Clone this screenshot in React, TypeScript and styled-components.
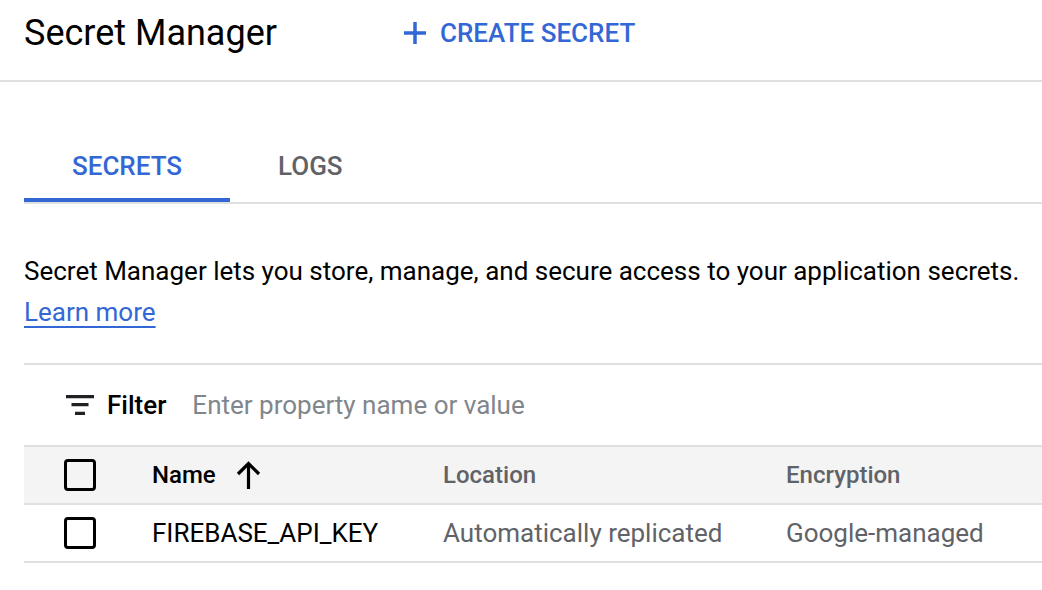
import React from "react";
import styled, { createGlobalStyle } from "styled-components";

const Global = createGlobalStyle`
  html, body { margin: 0; padding: 0; background: #fff; }
  body { font-family: Roboto, "Noto Sans", Arial, sans-serif; color: #202124; }
`;

const Page = styled.div`
  width: 1042px;
  height: 590px;
  overflow: hidden;
  display: flex;
  flex-direction: column;
`;

const Header = styled.header`
  height: 82px;
  flex-shrink: 0;
  display: flex;
  align-items: center;
  padding: 0 24px;
  border-bottom: 2px solid #e0e0e0;
  box-sizing: border-box;
`;

const Title = styled.h1`
  margin: -14px 0 0;
  font-size: 36px;
  font-weight: 400;
  color: #000;
  width: 379px;
  flex-shrink: 0;
`;

const CreateButton = styled.button`
  display: flex;
  align-items: center;
  gap: 13px;
  background: none;
  border: none;
  padding: 0;
  color: #3367d6;
  font-family: inherit;
  font-size: 26px;
  font-weight: 500;
  margin-top: -14px;
  white-space: nowrap;
`;

const Content = styled.div`
  padding: 0 0 0 24px;
`;

const Tabs = styled.div`
  margin-top: 48px;
  display: flex;
  border-bottom: 2px solid #e0e0e0;
`;

const Tab = styled.div<{ $active?: boolean }>`
  width: ${(p) => (p.$active ? "206px" : "auto")};
  padding: ${(p) => (p.$active ? "0" : "0 0 0 48px")};
  height: 72px;
  box-sizing: border-box;
  display: flex;
  align-items: center;
  justify-content: ${(p) => (p.$active ? "center" : "flex-start")};
  font-size: 26px;
  font-weight: 500;
  color: ${(p) => (p.$active ? "#3367d6" : "#5f6368")};
  border-bottom: 4px solid ${(p) => (p.$active ? "#3367d6" : "transparent")};
  padding-top: 4px;
`;

const Description = styled.p`
  margin: 47px 0 0;
  font-size: 26px;
  line-height: 41px;
  color: #000;
  white-space: nowrap;
`;

const LearnMore = styled.a`
  color: #3367d6;
  text-decoration: underline;
  text-decoration-thickness: 2px;
  text-underline-offset: 5px;
`;

const Divider = styled.div`
  margin-top: 30px;
  border-top: 2px solid #e0e0e0;
`;

const FilterBar = styled.div`
  height: 80px;
  display: flex;
  align-items: center;
  padding-left: 42px;
`;

const FilterLabel = styled.span`
  font-size: 26px;
  font-weight: 500;
  color: #000;
  margin-left: 13px;
`;

const FilterInput = styled.span`
  font-size: 26px;
  color: #80868b;
  margin-left: 26px;
`;

const Table = styled.div`
  display: flex;
  flex-direction: column;
`;

const Row = styled.div<{ $head?: boolean }>`
  display: grid;
  grid-template-columns: 128px 291px 343px 1fr;
  align-items: center;
  height: 58px;
  box-sizing: border-box;
  background: ${(p) => (p.$head ? "#f4f4f4" : "#fff")};
  border-top: 2px solid #e0e0e0;
  &:last-child { height: 60px; border-bottom: 2px solid #e0e0e0; }
`;

const CheckCell = styled.div`
  padding-left: 40px;
  display: flex;
  align-items: center;
`;

const Checkbox = styled.span`
  width: 32px;
  height: 32px;
  box-sizing: border-box;
  border: 3.5px solid #000;
  border-radius: 4px;
  display: inline-block;
`;

const Cell = styled.div<{ $head?: boolean; $dark?: boolean }>`
  font-size: ${(p) => (p.$head ? "24px" : "26px")};
  font-weight: ${(p) => (p.$head ? 500 : 400)};
  color: ${(p) => (p.$dark ? "#000" : "#5f6368")};
  display: flex;
  align-items: center;
  gap: 20px;
  white-space: nowrap;
`;

const PlusIcon = () => (
  <svg width="24" height="24" viewBox="0 0 24 24">
    <path d="M12 1v22M1 12h22" stroke="#3367d6" strokeWidth="3.5" />
  </svg>
);

const FilterIcon = () => (
  <svg width="28" height="20" viewBox="0 0 28 20">
    <path d="M0 0h28v3.3H0zM5.5 8h17v3.3h-17zM9 16.7h10V20H9z" fill="#202124" />
  </svg>
);

const ArrowUp = () => (
  <svg width="25" height="28" viewBox="0 0 25 28">
    <path d="M12.5 28V3M2 13L12.5 2.5 23 13" stroke="#000" strokeWidth="3.2" fill="none" />
  </svg>
);

export default function App() {
  return (
    <Page>
      <Global />
      <Header>
        <Title>Secret Manager</Title>
        <CreateButton>
          <PlusIcon />
          CREATE SECRET
        </CreateButton>
      </Header>
      <Content>
        <Tabs>
          <Tab $active>SECRETS</Tab>
          <Tab>LOGS</Tab>
        </Tabs>
        <Description>
          Secret Manager lets you store, manage, and secure access to your application secrets.
          <br />
          <LearnMore href="#">Learn more</LearnMore>
        </Description>
        <Divider />
        <FilterBar>
          <FilterIcon />
          <FilterLabel>Filter</FilterLabel>
          <FilterInput>Enter property name or value</FilterInput>
        </FilterBar>
        <Table>
          <Row $head>
            <CheckCell><Checkbox /></CheckCell>
            <Cell $head $dark>Name <ArrowUp /></Cell>
            <Cell $head>Location</Cell>
            <Cell $head>Encryption</Cell>
          </Row>
          <Row>
            <CheckCell><Checkbox /></CheckCell>
            <Cell $dark>FIREBASE_API_KEY</Cell>
            <Cell>Automatically replicated</Cell>
            <Cell>Google-managed</Cell>
          </Row>
        </Table>
      </Content>
    </Page>
  );
}
